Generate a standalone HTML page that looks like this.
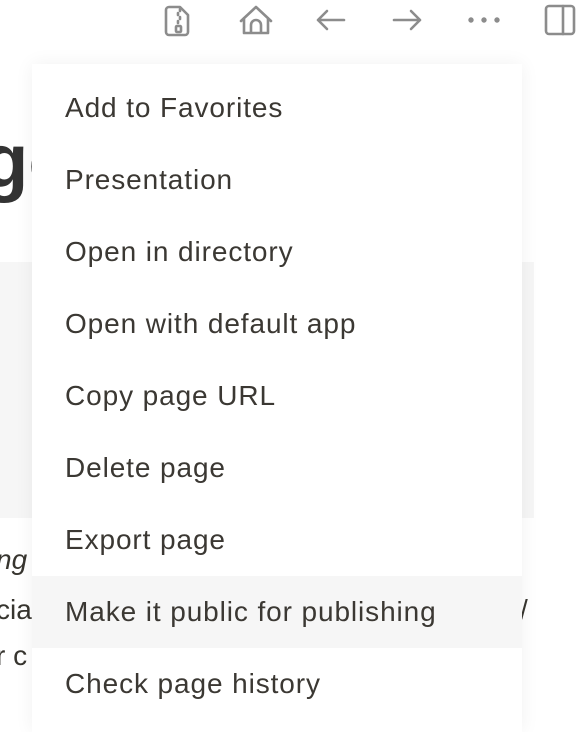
<!DOCTYPE html>
<html><head><style>
body{margin:0;width:580px;height:718px;overflow:hidden;background:#fff;font-family:"Liberation Sans",sans-serif;position:relative;color:#37352f}
.bg{position:absolute}
.menu{position:absolute;left:32px;top:64px;padding-top:8px;width:490px;height:660px;background:#fff;box-shadow:0 0 18px rgba(0,0,0,0.06)}
.item{height:72px;line-height:72px;padding-left:33px;font-size:28px;letter-spacing:0.9px;color:#3b3833}
.hl{background:#f6f6f6}
svg{position:absolute;top:0}
</style></head><body>
<svg width="580" height="45" viewBox="0 0 580 45" fill="none" stroke="#8c8c8c" stroke-width="2.6" stroke-linecap="round" stroke-linejoin="round">
<path d="M169 7h11l8 8v17a3 3 0 0 1-3 3h-16a3 3 0 0 1-3-3V10a3 3 0 0 1 3-3z"/>
<path d="M180 9v2M178 13v2M180 17v2M178 21v2" /><rect x="176" y="26" width="5" height="6" rx="1"/>
<path d="M241 21l15-14 15 14M244 18v15h24V18M251 33v-8a5 5 0 0 1 10 0v8"/>
<path d="M344 20h-26M327 11l-9 9 9 9"/>
<path d="M394 20h26M411 11l9 9-9 9"/>
<circle cx="471" cy="20" r="1.4" fill="#8c8c8c"/><circle cx="484" cy="20" r="1.4" fill="#8c8c8c"/><circle cx="497" cy="20" r="1.4" fill="#8c8c8c"/>
<rect x="546" y="6" width="28" height="28" rx="3"/><path d="M563 6v28"/>
</svg>
<div class="bg" style="left:-18px;top:118px;font-size:76px;font-weight:bold;color:#333">go</div>
<div class="bg" style="left:0;top:262px;width:534px;height:256px;background:#f6f6f6"></div>
<div class="bg" style="left:-4px;top:544px;font-size:28px;font-style:italic">ng</div>
<div class="bg" style="left:-4px;top:594px;font-size:28px">cia</div>
<div class="bg" style="left:-4px;top:640px;font-size:28px">r c</div>
<div class="bg" style="left:520px;top:594px;font-size:28px">/</div>
<div class="menu">
<div class="item">Add to Favorites</div>
<div class="item">Presentation</div>
<div class="item">Open in directory</div>
<div class="item">Open with default app</div>
<div class="item">Copy page URL</div>
<div class="item">Delete page</div>
<div class="item">Export page</div>
<div class="item hl">Make it public for publishing</div>
<div class="item">Check page history</div>
</div>
</body></html>
